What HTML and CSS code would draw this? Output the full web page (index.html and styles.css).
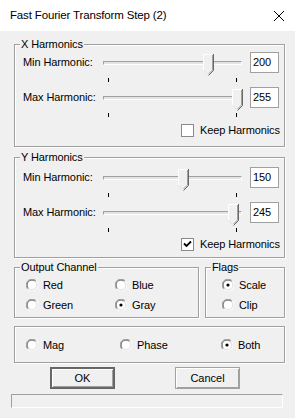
FILE: index.html
```html
<!DOCTYPE html>
<html lang="en">
<head>
  <meta charset="UTF-8" />
  <title>Fast Fourier Transform Step (2)</title>
  <link rel="stylesheet" href="styles.css">
</head>
<body>
  <svg width="0" height="0" class="defs">
    <symbol id="radio" viewBox="0 0 12 12">
      <path d="M1.8 10.2 A5.5 5.5 0 0 1 10.2 1.8" fill="none" stroke="#a0a0a0" />
      <path d="M10.2 1.8 A5.5 5.5 0 0 1 1.8 10.2" fill="none" stroke="#ffffff" />
      <path d="M2.5 9.5 A4.5 4.5 0 0 1 9.5 2.5" fill="none" stroke="#696969" />
      <path d="M9.5 2.5 A4.5 4.5 0 0 1 2.5 9.5" fill="none" stroke="#e3e3e3" />
      <circle cx="6" cy="6" r="4" fill="#ffffff" />
    </symbol>
    <symbol id="thumb" viewBox="0 0 11 22">
      <path d="M0.5 0.5 H10.5 V16.5 L5.5 21.5 L0.5 16.5 Z" fill="#f0f0f0" stroke="none" />
      <path d="M0.5 16.5 V0.5 H9.5" fill="none" stroke="#ffffff" />
      <path d="M10.5 0 V16.5 L5.5 21.5" fill="none" stroke="#696969" />
      <path d="M9.5 1 V16 L5.5 20" fill="none" stroke="#a0a0a0" />
      <path d="M0.5 16.5 L4.5 20.5" fill="none" stroke="#e3e3e3" />
    </symbol>
  </svg>

  <div class="titlebar">
    <span class="title">Fast Fourier Transform Step (2)</span>
    <svg class="close" width="10" height="10" viewBox="0 0 10 10">
      <path d="M0 0 L10 10 M10 0 L0 10" stroke="#000" stroke-width="1" />
    </svg>
  </div>

  <div class="client">
    <div class="group harm harm-x">
      <span class="caption">X Harmonics</span>
      <div class="srow">
        <span class="label">Min Harmonic:</span>
        <div class="slider">
          <div class="track"></div>
          <svg class="thumb" style="left: 102px"><use href="#thumb" /></svg>
          <i class="tick first"></i><i class="tick last"></i>
        </div>
        <div class="edit">200</div>
      </div>
      <div class="srow">
        <span class="label">Max Harmonic:</span>
        <div class="slider">
          <div class="track"></div>
          <svg class="thumb" style="left: 131px"><use href="#thumb" /></svg>
          <i class="tick first"></i><i class="tick last"></i>
        </div>
        <div class="edit">255</div>
      </div>
      <div class="check">
        <span class="box"></span>
        <span>Keep Harmonics</span>
      </div>
    </div>

    <div class="group harm harm-y">
      <span class="caption">Y Harmonics</span>
      <div class="srow">
        <span class="label">Min Harmonic:</span>
        <div class="slider">
          <div class="track"></div>
          <svg class="thumb" style="left: 77px"><use href="#thumb" /></svg>
          <i class="tick first"></i><i class="tick last"></i>
        </div>
        <div class="edit">150</div>
      </div>
      <div class="srow">
        <span class="label">Max Harmonic:</span>
        <div class="slider">
          <div class="track"></div>
          <svg class="thumb" style="left: 127px"><use href="#thumb" /></svg>
          <i class="tick first"></i><i class="tick last"></i>
        </div>
        <div class="edit">245</div>
      </div>
      <div class="check">
        <span class="box">
          <svg width="9" height="9" viewBox="0 0 9 9"><path d="M1 3.5 L3.5 6 L8 1.5" fill="none" stroke="#000" stroke-width="1.8" /></svg>
        </span>
        <span>Keep Harmonics</span>
      </div>
    </div>

    <div class="pair">
      <div class="group output">
        <span class="caption">Output Channel</span>
        <div class="radios">
          <span class="radio"><svg><use href="#radio" /></svg>Red</span>
          <span class="radio"><svg><use href="#radio" /></svg>Blue</span>
          <span class="radio"><svg><use href="#radio" /></svg>Green</span>
          <span class="radio on"><svg><use href="#radio" /><circle cx="6" cy="6" r="1.6" /></svg>Gray</span>
        </div>
      </div>
      <div class="group flags">
        <span class="caption">Flags</span>
        <span class="radio on"><svg><use href="#radio" /><circle cx="6" cy="6" r="1.6" /></svg>Scale</span>
        <span class="radio"><svg><use href="#radio" /></svg>Clip</span>
      </div>
    </div>

    <div class="group mode">
      <span class="radio mag"><svg><use href="#radio" /></svg>Mag</span>
      <span class="radio phase"><svg><use href="#radio" /></svg>Phase</span>
      <span class="radio on"><svg><use href="#radio" /><circle cx="6" cy="6" r="1.6" /></svg>Both</span>
    </div>

    <div class="buttons">
      <button class="btn default">OK</button>
      <button class="btn">Cancel</button>
    </div>

    <div class="status"></div>
  </div>
</body>
</html>
```

FILE: styles.css
```css
body {
  margin: 0;
  background-color: #f0f0f0;
  font-family: "Liberation Sans", Arial, sans-serif;
  font-size: 11px;
  letter-spacing: -0.1px;
  color: #000;
}

.defs {
  position: absolute;
}

.titlebar {
  height: 31px;
  background: #fff;
  display: flex;
  align-items: center;
  justify-content: space-between;
  padding: 0 10px 0 10px;
}

.title {
  font-size: 11.5px;
  letter-spacing: -0.15px;
  padding-bottom: 1px;
}

.close {
  margin-right: 1px;
}

.client {
  padding: 13px 0 0 14px;
}

.group {
  position: relative;
  box-sizing: border-box;
  width: 271px;
  border: 1px solid #a0a0a0;
  box-shadow: inset 1px 1px 0 #fff, 1px 1px 0 #fff;
}

.caption {
  position: absolute;
  top: -7px;
  left: 5px;
  padding: 0 1px;
  line-height: 13px;
  background: #f0f0f0;
}

.harm {
  padding: 7px 0 0 8px;
}

.harm-x {
  height: 103px;
  margin-bottom: 10px;
}

.harm-y {
  height: 101px;
  padding-top: 9px;
  margin-bottom: 9px;
}

.srow {
  height: 35px;
  display: flex;
  align-items: flex-start;
}

.label {
  width: 78px;
  line-height: 21px;
}

.slider {
  position: relative;
  width: 142px;
  height: 30px;
}

.track {
  margin: 9px 0 0 2px;
  width: 137px;
  height: 2px;
  border-top: 1px solid #a0a0a0;
  border-left: 1px solid #a0a0a0;
  border-bottom: 1px solid #fff;
  border-right: 1px solid #fff;
  background: #e3e3e3;
  box-sizing: content-box;
}

.thumb {
  position: absolute;
  top: 2px;
  width: 11px;
  height: 22px;
}

.tick {
  position: absolute;
  top: 26px;
  width: 1px;
  height: 4px;
  background: #000;
}

.tick.first {
  left: 7px;
}

.tick.last {
  left: 135px;
}

.edit {
  box-sizing: border-box;
  margin-left: 7px;
  width: 29px;
  height: 21px;
  padding: 1px 0 0 2px;
  background: #fff;
  border: 1px solid #a0a0a0;
  line-height: 16px;
}

.check {
  display: flex;
  align-items: center;
  margin: 1px 0 0 158px;
  height: 14px;
}

.harm-y .check {
  margin-top: 0;
}

.box {
  box-sizing: border-box;
  width: 13px;
  height: 13px;
  margin-right: 6px;
  background: #fff;
  border: 1px solid #8a8a8a;
  display: flex;
  align-items: center;
  justify-content: center;
}

.pair {
  display: flex;
  gap: 6px;
  margin-bottom: 8px;
}

.output {
  width: 185px;
  height: 51px;
  padding: 7px 0 0 11px;
}

.radios {
  display: grid;
  grid-template-columns: 89px 60px;
}

.flags {
  width: 80px;
  height: 51px;
  padding: 7px 0 0 16px;
}

.radio {
  display: flex;
  align-items: center;
  height: 20px;
}

.radio svg {
  width: 12px;
  height: 12px;
  margin-right: 5px;
}

.mode {
  height: 37px;
  padding: 8px 0 0 11px;
  display: flex;
  margin-bottom: 4px;
}

.mode .mag {
  width: 94px;
}

.mode .phase {
  width: 101px;
}

.buttons {
  display: flex;
  gap: 60px;
  padding-left: 36px;
  margin-bottom: 5px;
}

.btn {
  box-sizing: border-box;
  width: 65px;
  height: 22px;
  padding: 0;
  font: inherit;
  color: #000;
  background: #f0f0f0;
  border: 1px solid #a0a0a0;
  box-shadow: inset 1px 1px 0 #fff, inset -1px -1px 0 #a0a0a0;
}

.btn.default {
  border: 1px solid #646464;
  box-shadow: inset 1px 1px 0 #696969, inset -1px -1px 0 #696969, inset 2px 2px 0 #fff, inset -2px -2px 0 #a0a0a0;
}

.status {
  box-sizing: border-box;
  margin-left: -3px;
  width: 272px;
  height: 14px;
  border-top: 1px solid #a0a0a0;
  border-left: 1px solid #a0a0a0;
  border-bottom: 1px solid #fff;
  border-right: 1px solid #fff;
}
```
